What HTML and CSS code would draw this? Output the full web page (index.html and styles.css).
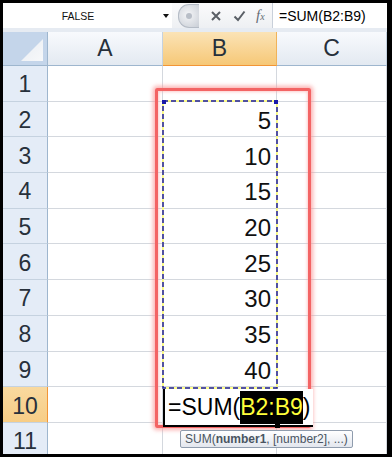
FILE: index.html
```html
<!DOCTYPE html>
<html lang="en">
<head>
    <meta charset="UTF-8">
    <title>SUM</title>
    <link rel="stylesheet" href="styles.css">
</head>
<body>
    <div class="screen">
        <!-- formula bar -->
        <div class="formula-bar">
            <div class="name-box">
                <span class="name">FALSE</span>
                <span class="drop"></span>
            </div>
            <div class="tools">
                <span class="knob"><span class="dot"></span></span>
                <svg class="tool" width="12" height="12" viewBox="0 0 12 12">
                    <path d="M2 2 L10 10 M10 2 L2 10" stroke="#5a5f66" stroke-width="2" fill="none" />
                </svg>
                <svg class="tool" width="13" height="12" viewBox="0 0 13 12">
                    <path d="M1.5 6.5 L5 10 L11.5 1.5" stroke="#5a5f66" stroke-width="2" fill="none" />
                </svg>
                <span class="fx"><i>f</i><i class="sub">x</i></span>
            </div>
            <div class="formula">=SUM(B2:B9)</div>
        </div>

        <!-- sheet -->
        <div class="sheet">
            <div class="grid">
                <div class="corner"><span></span></div>
                <div class="col-head">A</div>
                <div class="col-head sel">B</div>
                <div class="col-head">C</div>

                <div class="row-head">1</div><div class="cell"></div><div class="cell"></div><div class="cell"></div>
                <div class="row-head">2</div><div class="cell"></div><div class="cell num">5</div><div class="cell"></div>
                <div class="row-head">3</div><div class="cell"></div><div class="cell num">10</div><div class="cell"></div>
                <div class="row-head">4</div><div class="cell"></div><div class="cell num">15</div><div class="cell"></div>
                <div class="row-head">5</div><div class="cell"></div><div class="cell num">20</div><div class="cell"></div>
                <div class="row-head">6</div><div class="cell"></div><div class="cell num">25</div><div class="cell"></div>
                <div class="row-head">7</div><div class="cell"></div><div class="cell num">30</div><div class="cell"></div>
                <div class="row-head">8</div><div class="cell"></div><div class="cell num">35</div><div class="cell"></div>
                <div class="row-head">9</div><div class="cell"></div><div class="cell num">40</div><div class="cell"></div>
                <div class="row-head sel">10</div><div class="cell"></div><div class="cell"></div><div class="cell"></div>
                <div class="row-head">11</div><div class="cell"></div><div class="cell"></div><div class="cell"></div>
            </div>

            <!-- red highlight -->
            <div class="highlight"></div>

            <!-- copy range B2:B9 -->
            <svg class="ants" width="116" height="289" viewBox="0 0 116 289">
                <rect x="1" y="1" width="114" height="287" fill="none" stroke="#ffff66" stroke-width="1.5" />
                <rect x="1" y="1" width="114" height="287" fill="none" stroke="#1a1aa8" stroke-width="1.5" stroke-dasharray="5 3" />
                <rect x="0" y="0" width="4" height="4" fill="#1a1aa8" />
                <rect x="112" y="0" width="4" height="4" fill="#1a1aa8" />
            </svg>

            <!-- editing cell -->
            <div class="editor">=SUM(<span class="ref">B2:B9</span>)</div>
            <div class="handle"></div>

            <!-- tooltip -->
            <div class="tip">SUM(<b>number1</b>, [number2], ...)</div>
        </div>
    </div>
</body>
</html>
```

FILE: styles.css
```css
body {
    margin: 0;
    padding: 0;
    background: #000;
    font-family: "Liberation Sans", Arial, sans-serif;
}

.screen {
    width: 384px;
    height: 451px;
    padding: 3px 5px 3px 3px;
    background: #000;
    display: flex;
    flex-direction: column;
}

/* formula bar */
.formula-bar {
    height: 25px;
    display: flex;
    background: #fff;
    border-bottom: 4px solid #e6ebf2;
}

.name-box {
    width: 169px;
    display: flex;
    align-items: center;
}

.name {
    width: 150px;
    text-align: center;
    font-size: 10.5px;
    color: #111;
}

.drop {
    margin-left: 10px;
    width: 0;
    height: 0;
    border-left: 3px solid transparent;
    border-right: 3px solid transparent;
    border-top: 4px solid #111;
}

.tools {
    width: 100px;
    display: flex;
    align-items: center;
    background: linear-gradient(#fbfbfc, #eef0f3);
}

.knob {
    margin-left: 6px;
    width: 20px;
    height: 22px;
    border-radius: 11px 0 0 11px;
    background: radial-gradient(circle at 45% 45%, #f4f5f7, #c9ced6);
    border: 1px solid #b5bcc6;
    border-right: none;
    display: flex;
    align-items: center;
    justify-content: center;
}

.dot {
    width: 6px;
    height: 6px;
    border-radius: 50%;
    background: #b8bec7;
}

.tool {
    margin-left: 11px;
}

.fx {
    margin-left: 10px;
    font-family: "Liberation Serif", serif;
    font-size: 15px;
    color: #666c75;
}

.fx .sub {
    font-size: 10px;
}

.formula {
    flex: 1;
    padding-left: 6px;
    display: flex;
    align-items: center;
    font-size: 14px;
    color: #000;
    border-left: 1px solid #c9d0da;
}

/* sheet */
.sheet {
    position: relative;
    flex: 1;
    overflow: hidden;
    background: #fff;
}

.grid {
    display: grid;
    grid-template-columns: 45px 115px 114px 110px;
    grid-template-rows: 34px repeat(11, 35.7px);
}

.corner {
    background: #c4d5ea;
    border-right: 1px solid #9eb6ce;
    border-bottom: 1px solid #9eb6ce;
    box-sizing: border-box;
    position: relative;
}

.corner span {
    position: absolute;
    right: 4px;
    bottom: 4px;
    width: 22px;
    height: 22px;
    background: linear-gradient(135deg, #e9edf2, #f7f8fa);
    clip-path: polygon(100% 0, 100% 100%, 0 100%);
}

.col-head {
    display: flex;
    align-items: center;
    justify-content: center;
    font-size: 23px;
    color: #27303b;
    background: linear-gradient(#f8fafd, #e3e9f1);
    border-right: 1px solid #c5d2e0;
    border-bottom: 1px solid #9eb6ce;
    box-sizing: border-box;
}

.col-head.sel {
    background: linear-gradient(#fbe3b6, #f6c877);
    border-bottom: 1px solid #f29536;
    border-right: 1px solid #f0b35a;
}

.row-head {
    display: flex;
    align-items: center;
    justify-content: center;
    padding-top: 3px;
    box-sizing: border-box;
    font-size: 23px;
    color: #27303b;
    background: #e4ecf7;
    border-right: 1px solid #9eb6ce;
    border-bottom: 1px solid #c5d2e0;
}

.row-head.sel {
    background: linear-gradient(#f9d99f, #f7cd86);
    border-right: 1px solid #f29536;
}

.cell {
    border-right: 1px solid #d4d8de;
    border-bottom: 1px solid #d4d8de;
    box-sizing: border-box;
}

.num {
    display: flex;
    align-items: center;
    justify-content: flex-end;
    padding: 4px 5px 0 0;
    font-size: 24px;
    color: #111;
}

/* overlays */
.highlight {
    position: absolute;
    left: 152px;
    top: 56px;
    width: 150px;
    height: 334px;
    border: 3px solid #f36464;
    border-radius: 2px;
    box-shadow: 0 0 4px 2px rgba(250, 150, 150, 0.75), inset 0 0 3px 1px rgba(250, 170, 170, 0.6);
}

.ants {
    position: absolute;
    left: 159px;
    top: 68px;
}

.editor {
    position: absolute;
    left: 160px;
    top: 357px;
    height: 36px;
    padding-left: 3px;
    padding-right: 2px;
    display: flex;
    align-items: center;
    background: #fff;
    border-left: 2px solid #000;
    border-bottom: 2px solid #000;
    font-size: 23px;
    color: #000;
}

.ref {
    background: #000;
    color: #ffff3a;
    line-height: 33px;
}

.handle {
    position: absolute;
    left: 272px;
    top: 392px;
    width: 5px;
    height: 4px;
    background: #000;
}

.tip {
    position: absolute;
    left: 177px;
    top: 398px;
    height: 16px;
    padding: 0 4px;
    display: flex;
    align-items: center;
    font-size: 12px;
    color: #4a5562;
    background: linear-gradient(#ffffff, #e3e7ee);
    border: 1px solid #8f9cad;
    border-radius: 2px;
}
```
